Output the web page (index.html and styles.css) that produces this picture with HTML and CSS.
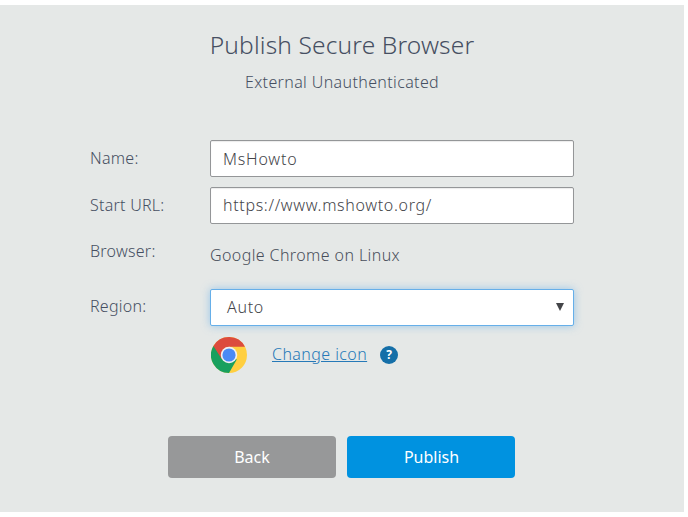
FILE: index.html
```
<!DOCTYPE html>
<html lang="en">
<head>
    <meta charset="UTF-8">
    <meta name="viewport" content="width=device-width, initial-scale=1.0">
    <title>Publish Secure Browser</title>
    <link rel="stylesheet" href="styles.css">
</head>
<body>
    <main class="dialog">
        <h1>Publish Secure Browser</h1>
        <p class="subtitle">External Unauthenticated</p>

        <form class="publish-form">
            <div class="row">
                <label for="name">Name:</label>
                <input class="field name-field" id="name" type="text" value="MsHowto">
            </div>
            <div class="row">
                <label for="url">Start URL:</label>
                <input class="field url-field" id="url" type="text" value="https://www.mshowto.org/">
            </div>
            <div class="row browser-row">
                <label>Browser:</label>
                <span class="browser-name">Google Chrome on Linux</span>
            </div>
            <div class="row region-row">
                <label for="region">Region:</label>
                <div class="field select" id="region" tabindex="0">
                    <span>Auto</span>
                    <svg class="arrow" viewBox="0 0 8 8" width="8" height="8"><path d="M0 0h8L4 8z" fill="#444549"/></svg>
                </div>
            </div>
            <div class="icon-row">
                <svg class="chrome" viewBox="0 0 48 48" width="36" height="36">
                    <circle cx="24" cy="24" r="24" fill="#ffcf40"/>
                    <path d="M24 24 3.2 12A24 24 0 0 0 24 48L34.4 30z" fill="#18a05e"/>
                    <path d="M3.2 12A24 24 0 0 1 45.3 13H24L14.5 29.5z" fill="#dc4b3e"/>
                    <circle cx="24" cy="24" r="11" fill="#f1f1f1"/>
                    <circle cx="24" cy="24" r="8.8" fill="#4a8af4"/>
                </svg>
                <a class="change-icon" href="#">Change icon</a>
                <span class="help">?</span>
            </div>
            <div class="buttons">
                <button class="back" type="button">Back</button>
                <button class="publish" type="button">Publish</button>
            </div>
        </form>
    </main>
</body>
</html>
```
FILE: styles.css
```
* {
    box-sizing: border-box;
}
body {
    margin: 0;
    padding-top: 5px;
    background: #fff;
    font-family: "Noto Sans", "Open Sans", sans-serif;
    font-size: 16px;
    font-weight: 350;
    color: #464f62;
}
.dialog {
    width: 684px;
    height: 507px;
    padding-top: 22px;
    background: #e5e8e7;
}
h1 {
    margin: 0;
    font-size: 24.5px;
    font-weight: 350;
    line-height: 36px;
    letter-spacing: 0.15px;
    text-align: center;
}
.subtitle {
    margin: 7px 0 0;
    line-height: 24px;
    letter-spacing: 0.37px;
    text-align: center;
}
.publish-form {
    width: 484px;
    margin: 46px 0 0 90px;
}
.row {
    display: flex;
    height: 37px;
    margin-bottom: 10px;
}
.row label {
    width: 120px;
    line-height: 36px;
    letter-spacing: 0.25px;
}
.field {
    width: 364px;
    height: 37px;
    padding: 0 12px;
    border: 1px solid #949698;
    border-radius: 2px;
    background: #fff;
    box-shadow: inset 0 1px 1px rgba(0, 0, 0, 0.08);
    font: inherit;
    color: #434449;
    outline: none;
}
.name-field {
    letter-spacing: 0.8px;
}
.url-field {
    padding-bottom: 2px;
    letter-spacing: 0.67px;
}
.browser-row {
    height: 45px;
}
.browser-row label,
.region-row label {
    line-height: 34px;
}
.browser-name {
    padding-top: 9px;
    line-height: 24px;
    letter-spacing: 0.4px;
    color: #484e5a;
}
.select {
    display: flex;
    align-items: center;
    justify-content: space-between;
    padding: 0 9px 2px 16px;
    border-color: #66afe9;
    box-shadow: 0 0 8px rgba(102, 175, 233, 0.6);
    letter-spacing: 0.7px;
}
.icon-row {
    display: flex;
    align-items: center;
    height: 38px;
    margin-left: 121px;
}
.change-icon {
    margin: -2px 0 0 25px;
    letter-spacing: 0.42px;
    color: #2679b8;
}
.help {
    width: 18px;
    height: 18px;
    margin-left: 13px;
    border-radius: 50%;
    background: #156fa8;
    color: #fff;
    font-size: 12px;
    font-weight: 700;
    line-height: 18px;
    text-align: center;
}
.buttons {
    display: flex;
    gap: 11px;
    margin: 62px 0 0 78px;
}
.buttons button {
    width: 168px;
    height: 42px;
    padding: 0;
    border: none;
    border-radius: 4px;
    font: inherit;
    font-weight: 400;
    color: #fff;
    cursor: pointer;
}
.buttons .back {
    background: #979899;
}
.buttons .publish {
    padding-left: 1px;
    background: #0092e0;
}
```
